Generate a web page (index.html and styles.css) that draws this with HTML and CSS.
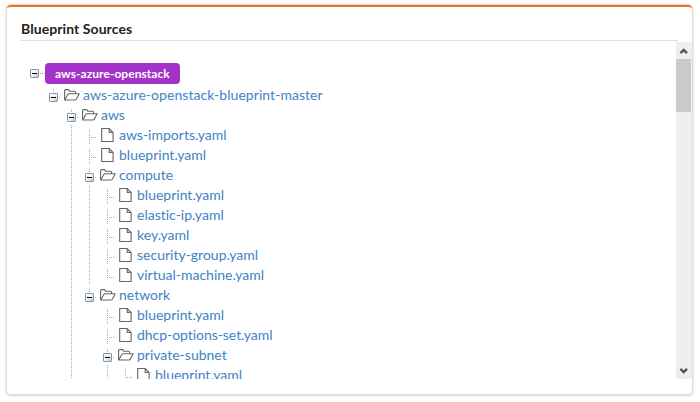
FILE: index.html
```
<!DOCTYPE html>
<html lang="en">
<head>
<meta charset="utf-8">
<title>Blueprint Sources</title>
<link rel="stylesheet" href="styles.css">
</head>
<body>
<svg class="defs" aria-hidden="true">
  <defs>
    <linearGradient id="face" x1="0" y1="0" x2="1" y2="1"><stop offset="0" stop-color="#fff"/><stop offset=".5" stop-color="#f5f3ef"/><stop offset="1" stop-color="#c5bcae"/></linearGradient>
    <symbol id="toggle" viewBox="0 0 9 9"><rect x=".5" y=".5" width="8" height="8" rx=".6" fill="url(#face)" stroke="#7b98b5"/><path d="M2 4.5h5" stroke="#000"/></symbol>
    <symbol id="folder" viewBox="0 0 16 12"><path d="M.6 10.7V1.6Q.6.6 1.6.6H4.6L6 2.3H10.6Q11.6 2.3 11.6 3.4V4.7M.7 11L3.8 5.4Q4.1 4.8 4.8 4.8H15.2L12.4 10Q11.9 11 10.9 11Z" fill="none" stroke="#666" stroke-width="1.1" stroke-linejoin="round"/></symbol>
    <symbol id="file" viewBox="0 0 13 14"><path d="M.7.5H8.2L12.1 4.4V13.5H.7ZM8.2.5V4.4H12.1" fill="none" stroke="#666" stroke-width="1.1"/></symbol>
  </defs>
</svg>
<main class="card">
  <h1 class="title">Blueprint Sources</h1>
  <div class="viewport">
    <div class="tree">
      <div class="root"><svg class="toggle"><use href="#toggle"/></svg><i class="link"></i><span class="badge">aws-azure-openstack</span></div>
      <div class="row"><i class="gap"></i><span class="node"><svg class="toggle"><use href="#toggle"/></svg></span><svg class="folder"><use href="#folder"/></svg><a class="archive">aws-azure-openstack-blueprint-master</a></div>
      <div class="row"><i class="gap"></i><i class="gap"></i><span class="node"><svg class="toggle"><use href="#toggle"/></svg></span><svg class="folder"><use href="#folder"/></svg><a>aws</a></div>
      <div class="row"><i class="gap"></i><i class="gap"></i><i class="guide"></i><span class="leaf"></span><svg class="file"><use href="#file"/></svg><a>aws-imports.yaml</a></div>
      <div class="row"><i class="gap"></i><i class="gap"></i><i class="guide"></i><span class="leaf"></span><svg class="file"><use href="#file"/></svg><a>blueprint.yaml</a></div>
      <div class="row"><i class="gap"></i><i class="gap"></i><i class="guide"></i><span class="node"><svg class="toggle"><use href="#toggle"/></svg></span><svg class="folder"><use href="#folder"/></svg><a>compute</a></div>
      <div class="row"><i class="gap"></i><i class="gap"></i><i class="guide"></i><i class="guide"></i><span class="leaf"></span><svg class="file"><use href="#file"/></svg><a>blueprint.yaml</a></div>
      <div class="row"><i class="gap"></i><i class="gap"></i><i class="guide"></i><i class="guide"></i><span class="leaf"></span><svg class="file"><use href="#file"/></svg><a>elastic-ip.yaml</a></div>
      <div class="row"><i class="gap"></i><i class="gap"></i><i class="guide"></i><i class="guide"></i><span class="leaf"></span><svg class="file"><use href="#file"/></svg><a>key.yaml</a></div>
      <div class="row"><i class="gap"></i><i class="gap"></i><i class="guide"></i><i class="guide"></i><span class="leaf"></span><svg class="file"><use href="#file"/></svg><a>security-group.yaml</a></div>
      <div class="row"><i class="gap"></i><i class="gap"></i><i class="guide"></i><i class="guide"></i><span class="leaf last"></span><svg class="file"><use href="#file"/></svg><a>virtual-machine.yaml</a></div>
      <div class="row"><i class="gap"></i><i class="gap"></i><i class="guide"></i><span class="node"><svg class="toggle"><use href="#toggle"/></svg></span><svg class="folder"><use href="#folder"/></svg><a>network</a></div>
      <div class="row"><i class="gap"></i><i class="gap"></i><i class="guide"></i><i class="gap"></i><span class="leaf"></span><svg class="file"><use href="#file"/></svg><a>blueprint.yaml</a></div>
      <div class="row"><i class="gap"></i><i class="gap"></i><i class="guide"></i><i class="gap"></i><span class="leaf"></span><svg class="file"><use href="#file"/></svg><a class="dense">dhcp-options-set.yaml</a></div>
      <div class="row"><i class="gap"></i><i class="gap"></i><i class="guide"></i><i class="gap"></i><span class="node"><svg class="toggle"><use href="#toggle"/></svg></span><svg class="folder"><use href="#folder"/></svg><a>private-subnet</a></div>
      <div class="row"><i class="gap"></i><i class="gap"></i><i class="guide"></i><i class="gap"></i><i class="guide"></i><span class="leaf last"></span><svg class="file"><use href="#file"/></svg><a>blueprint.yaml</a></div>
    </div>
    <div class="scrollbar">
      <svg class="arrow" viewBox="0 0 16 17"><path d="M4.4 11.2L7.7 7.9L11 11.2" fill="none" stroke="#555" stroke-width="2.5"/></svg>
      <div class="thumb"></div>
      <svg class="arrow down" viewBox="0 0 16 17"><path d="M4.4 6.8L7.7 10.1L11 6.8" fill="none" stroke="#555" stroke-width="2.5"/></svg>
    </div>
  </div>
</main>
</body>
</html>
```
FILE: styles.css
```
* { box-sizing: border-box; }
body { margin: 0; padding: 5px 7px; background: #fff; font-family: Lato, sans-serif; font-variant-ligatures: none; }
.defs { position: absolute; width: 0; height: 0; }
.card { width: 685px; height: 389px; border-top: 2px solid #f2711c; border-radius: 4px; background: #fff; box-shadow: 0 0 0 1px #dcdddd, 0 1px 3px 1px #d4d4d5; }
.title { margin: 0 14px; height: 34px; padding-top: 12px; border-bottom: 1px solid #ddd; font-size: 14px; line-height: 20px; font-weight: 700; letter-spacing: .07px; color: #222; }
.viewport { display: flex; height: 337px; margin-top: 1px; overflow: hidden; }
.tree { flex: 1; padding: 21px 0 0 24px; }
.root { display: flex; align-items: center; height: 21px; margin: 0 0 1px -1px; }
.toggle { display: block; width: 9px; height: 9px; flex: none; }
.link { width: 6px; height: 1px; background: repeating-linear-gradient(90deg, transparent 0 1px, #aaa 1px 2px); }
.badge { height: 21px; padding: 0 10px; border-radius: 4px; background: #a333c8; color: #fff; font-size: 12px; line-height: 21px; font-weight: 700; letter-spacing: .05px; }
.row { display: flex; height: 20px; color: #4183c4; font-size: 14px; line-height: 20px; white-space: nowrap; }
.gap, .guide, .node, .leaf { flex: none; width: 18px; height: 20px; }
.guide, .leaf, .node { background-repeat: no-repeat; }
.guide { background-image: repeating-linear-gradient(#aaa 0 1px, transparent 1px 2px); background-size: 1px 20px; background-position: 4px 0; }
.node { padding-top: 8px; background-image: repeating-linear-gradient(#aaa 0 1px, transparent 1px 2px), linear-gradient(#aaa, #aaa); background-size: 1px 8px, 1px 1px; background-position: 4px 4px, 10px 12px; }
.leaf { background-image: repeating-linear-gradient(#aaa 0 1px, transparent 1px 2px), repeating-linear-gradient(90deg, transparent 0 1px, #aaa 1px 2px); background-size: 1px 15px, 6px 1px; background-position: 4px 4px, 5px 12px; }
.leaf.last { background-size: 1px 9px, 6px 1px; }
.folder { flex: none; width: 16px; height: 12px; margin: 4px 1px 0 -3px; }
.file { flex: none; width: 13px; height: 14px; margin: 3px 3px 0 -2px; }
.row a { margin-left: 2px; }
.row .archive { letter-spacing: .05px; }
.row .dense { letter-spacing: -.05px; }
.scrollbar { display: flex; flex-direction: column; width: 16px; background: #efefef; }
.arrow { flex: none; display: block; width: 16px; height: 17px; }
.thumb { width: 15px; height: 53px; background: #cbcbcb; }
.down { margin-top: auto; }
```
